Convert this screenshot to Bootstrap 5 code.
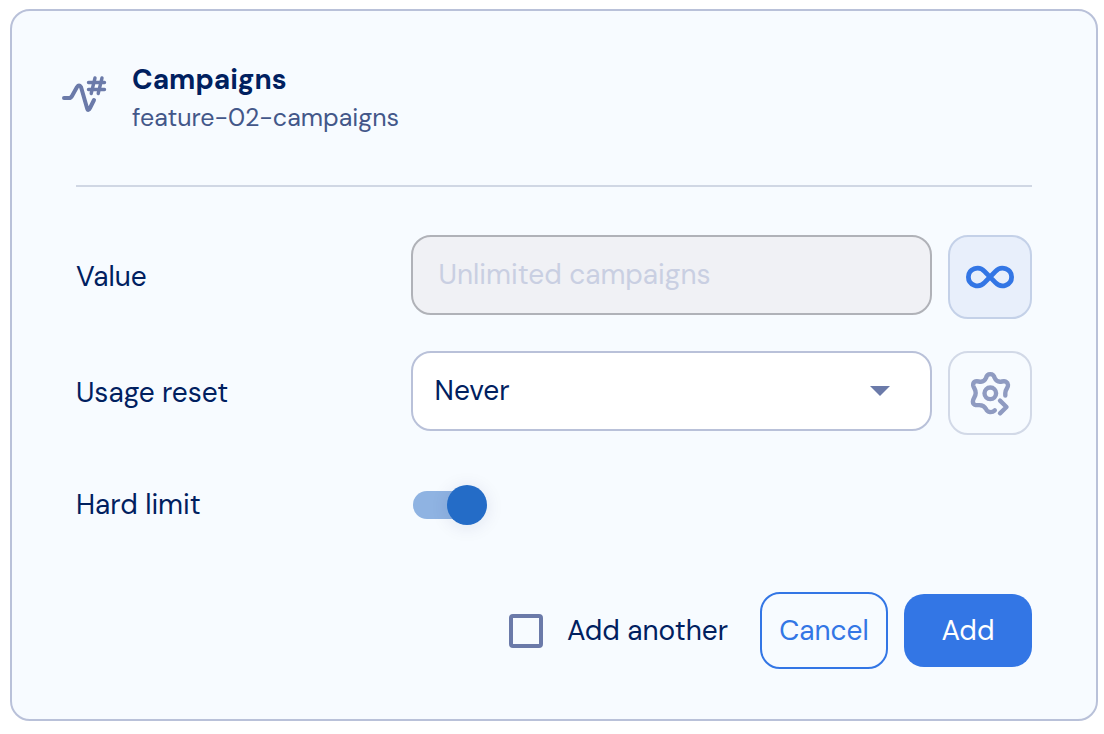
<!DOCTYPE html>
<html lang="en">
<head>
<meta charset="utf-8">
<meta name="viewport" content="width=device-width, initial-scale=1">
<title>Campaigns</title>
<link href="https://cdn.jsdelivr.net/npm/bootstrap@5.3.0/dist/css/bootstrap.min.css" rel="stylesheet">
<style>
:root { --navy: #00205f; --blue: #3376e5; --slate: #6b7aa9; --line: #b9c1d9; }
body { font-family: "DM Sans", Inter, "Liberation Sans", sans-serif; font-size: 28px; line-height: 36px; color: var(--navy); background: #fff; padding: 9px 6px 12px 10px; }
.panel { background: #f7fbff; border: 2px solid var(--line); border-radius: 20px; padding: 50px 64px; }
.panel-head { padding-bottom: 48px; margin-bottom: 48px; border-bottom: 2px solid #d0d7e4; }
.head-icon { margin: 0 24px 6px -16px; }
.feature-name { font-size: 28px; line-height: 38px; font-weight: 700; }
.feature-key { font-size: 25px; line-height: 38px; color: #435789; }
.field-label { flex: 0 0 35%; }
.field-row { margin-bottom: 32px; }
.field { height: 80px; border: 2px solid var(--line); border-radius: 20px; font-size: 28px; color: var(--navy); }
.field.form-control { padding: 0 26px 2px; }
.field.form-control:disabled { background: #f0f1f5; border-color: #b0b2b8; }
.field.form-control::placeholder { color: #c9cfe2; opacity: 1; }
.field.form-select { padding: 0 72px 0 22px; background-color: #fff; background-size: 20px 10px; background-position: right 40px center;
  background-image: url("data:image/svg+xml,%3Csvg xmlns='http://www.w3.org/2000/svg' viewBox='0 0 20 10'%3E%3Cpath fill='%236b7aa9' d='M0 0h20L10 10z'/%3E%3C/svg%3E"); }
.tool { width: 84px; height: 84px; border: 2px solid #d2d9e7; border-radius: 20px; color: #8f9bc1; padding: 0; }
.tool.active { background: #e8effb; border-color: #c4d1e8; color: var(--blue); }
.toggle { appearance: none; position: relative; width: 74px; height: 40px; margin: 0 0 0 2px; cursor: pointer; }
.toggle::before { content: ""; position: absolute; inset: 6px 6px 6px 0; border-radius: 14px; background: #8fb3e2; }
.toggle::after { content: ""; position: absolute; right: 0; top: 0; width: 40px; height: 40px; border-radius: 50%; background: #246cc7; box-shadow: 0 2px 18px rgba(0, 32, 95, .1); }
.toggle:not(:checked)::after { right: auto; left: 0; }
.limit-row { height: 76px; margin-bottom: 49px; }
.tick.form-check-input { width: 34px; height: 34px; border: 4px solid var(--slate); border-radius: 4px; background-color: transparent; margin: 0; }
.action { width: 128px; height: 73px; border-radius: 20px; font-size: 28px; padding: 0; }
.action-cancel { height: 77px; border: 2px solid var(--blue); color: var(--blue); }
.action-add, .action-add:hover { border: 0; background: var(--blue); color: #fff; }
</style>
</head>
<body>
<form class="panel">
  <header class="panel-head d-flex align-items-center">
    <svg class="head-icon flex-shrink-0" width="48" height="48" viewBox="0 0 48 48" fill="none" stroke="#6b7aa9" stroke-width="4" stroke-linecap="round" stroke-linejoin="round" aria-hidden="true">
      <path d="M4 26h5q2 0 3-2l5-9q2-3 4 0l6 21q1 4 3 0l4-8"/>
      <path stroke-width="3.400" d="M28.500 10.500h16M28.500 17.500h16M35 6l-3.800 15.500M42 6l-3.800 15.500"/>
    </svg>
    <div>
      <h1 class="feature-name mb-0">Campaigns</h1>
      <div class="feature-key">feature-02-campaigns</div>
    </div>
  </header>

  <div class="field-row d-flex align-items-center">
    <label class="field-label" for="value">Value</label>
    <div class="d-flex flex-grow-1 gap-3">
      <input class="field form-control" id="value" type="text" placeholder="Unlimited campaigns" disabled>
      <button class="tool active btn flex-shrink-0" type="button" aria-label="Unlimited" aria-pressed="true">
        <svg width="48" height="48" viewBox="0 0 48 48" fill="none" stroke="currentColor" stroke-width="4.800" aria-hidden="true">
          <path d="M24 24l-5.500 5.700C12.500 36 2.400 32 2.400 24S12.500 12 18.500 18.300L29.500 29.700C35.500 36 45.600 32 45.600 24S35.500 12 29.500 18.300z"/>
        </svg>
      </button>
    </div>
  </div>

  <div class="field-row d-flex align-items-center">
    <label class="field-label" for="reset">Usage reset</label>
    <div class="d-flex flex-grow-1 gap-3">
      <select class="field form-select" id="reset"><option>Never</option><option>Monthly</option></select>
      <button class="tool btn flex-shrink-0" type="button" aria-label="Reset settings">
        <svg width="48" height="48" viewBox="0 0 48 48" fill="none" stroke="currentColor" stroke-width="4.400" stroke-linecap="round" stroke-linejoin="round" aria-hidden="true">
          <path d="M39.300 26.500V24C39.300 20 42.300 19 42 16C41.700 12.500 39 11.800 36 12.500C32 13.500 30 12 28.700 9C27.500 3.800 21 3.800 20 9C18.700 12 16.500 13.500 12.700 12.500C9 11.800 6.900 13 7.200 16.500C7.500 19 9.700 20 9.700 24C9.700 28 6.900 29 6.900 32.500C6.900 36 9.500 36.300 13 36.100C17 36 18.500 37 20 40C21.500 43.700 26 44 28.800 41.300"/>
          <circle cx="24.300" cy="24.300" r="5.800"/>
          <path d="M34 31.700l6.500 6.300-6.500 6.300"/>
        </svg>
      </button>
    </div>
  </div>

  <div class="limit-row d-flex align-items-center">
    <label class="field-label" for="limit">Hard limit</label>
    <input class="toggle" id="limit" type="checkbox" role="switch" checked>
  </div>

  <div class="d-flex align-items-center justify-content-end gap-3">
    <div class="d-flex align-items-center me-3">
      <input class="tick form-check-input me-4" id="another" type="checkbox">
      <label for="another">Add another</label>
    </div>
    <button class="action action-cancel btn" type="button">Cancel</button>
    <button class="action action-add btn" type="submit">Add</button>
  </div>
</form>
<script src="https://cdn.jsdelivr.net/npm/bootstrap@5.3.0/dist/js/bootstrap.bundle.min.js"></script>
</body>
</html>
